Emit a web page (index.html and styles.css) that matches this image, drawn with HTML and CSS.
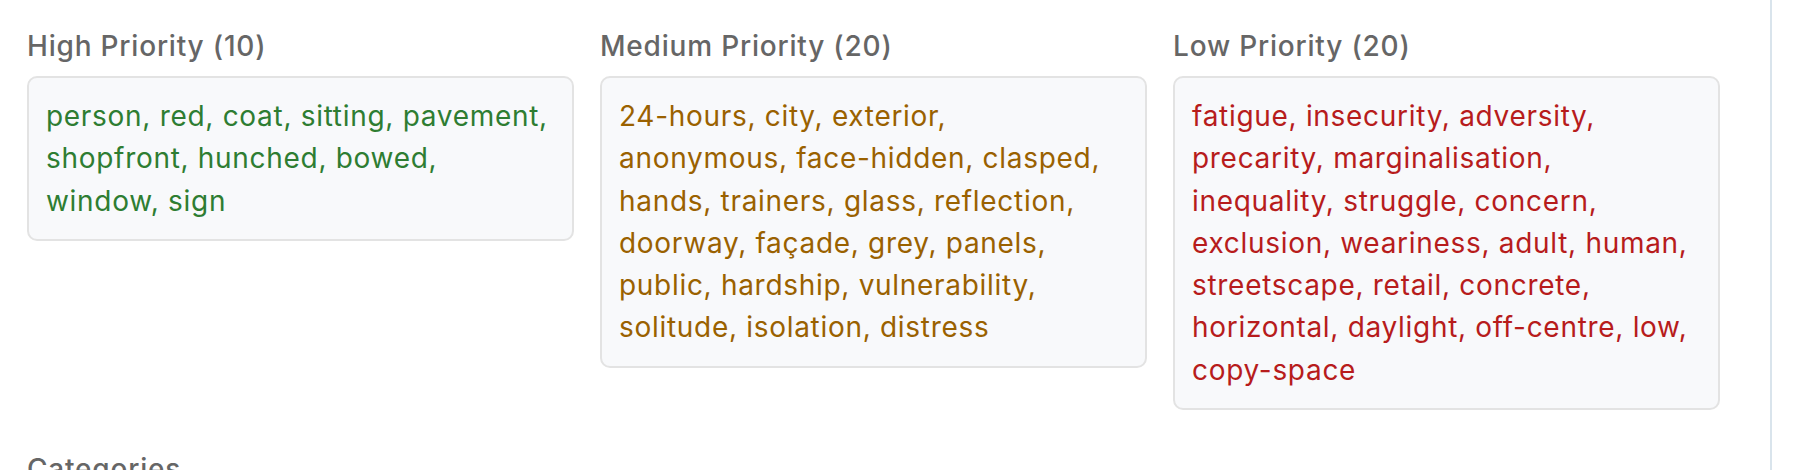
FILE: index.html
```html
<!DOCTYPE html>
<html lang="en">
<head>
  <meta charset="UTF-8">
  <title>Keywords</title>
  <link rel="stylesheet" href="styles.css">
</head>
<body>
<div class="layout">
  <main class="panel">
    <section class="priorities">
      <div class="priority">
        <h3>High Priority (10)</h3>
        <div class="keywords high">person, red, coat, sitting, pavement,<br>shopfront, hunched, bowed,<br>window, sign</div>
      </div>
      <div class="priority">
        <h3>Medium Priority (20)</h3>
        <div class="keywords medium">24-hours, city, exterior,<br>anonymous, face-hidden, clasped,<br>hands, trainers, glass, reflection,<br>doorway, façade, grey, panels,<br>public, hardship, vulnerability,<br>solitude, isolation, distress</div>
      </div>
      <div class="priority">
        <h3>Low Priority (20)</h3>
        <div class="keywords low">fatigue, insecurity, adversity,<br>precarity, marginalisation,<br>inequality, struggle, concern,<br>exclusion, weariness, adult, human,<br>streetscape, retail, concrete,<br>horizontal, daylight, off-centre, low,<br>copy-space</div>
      </div>
    </section>
    <section class="categories">
      <h3>Categories</h3>
    </section>
  </main>
  <aside class="gutter"></aside>
</div>
</body>
</html>
```

FILE: styles.css
```css
:root {
  --label: #666;
  --box-bg: #f8f9fb;
  --box-border: #e3e3e3;
  --high: #2e7d32;
  --medium: #9a6100;
  --low: #b71c1c;
}
body {
  margin: 0;
  font-family: 'Inter', 'Noto Sans', sans-serif;
  background: white;
  color: #333;
}
.layout {
  display: flex;
  height: 470px;
  overflow: hidden;
}
.panel {
  flex: 1;
  padding: 25px 50px 0 27px;
  border-right: 2px solid #d9e4ec;
}
.gutter {
  width: 24px;
}
h3 {
  margin: 0 0 9px;
  font-size: 28px;
  font-weight: 500;
  line-height: 42px;
  letter-spacing: 0.8px;
  color: var(--label);
}
.priorities {
  display: grid;
  grid-template-columns: repeat(3, 1fr);
  gap: 26px;
  align-items: start;
  margin-bottom: 38px;
}
.keywords {
  padding: 17px;
  border: 2px solid var(--box-border);
  border-radius: 10px;
  background: var(--box-bg);
  font-size: 28px;
  line-height: 42.3px;
  letter-spacing: 0.7px;
  white-space: nowrap;
}
.keywords.high { color: var(--high); }
.keywords.medium { color: var(--medium); }
.keywords.low { color: var(--low); }
```
